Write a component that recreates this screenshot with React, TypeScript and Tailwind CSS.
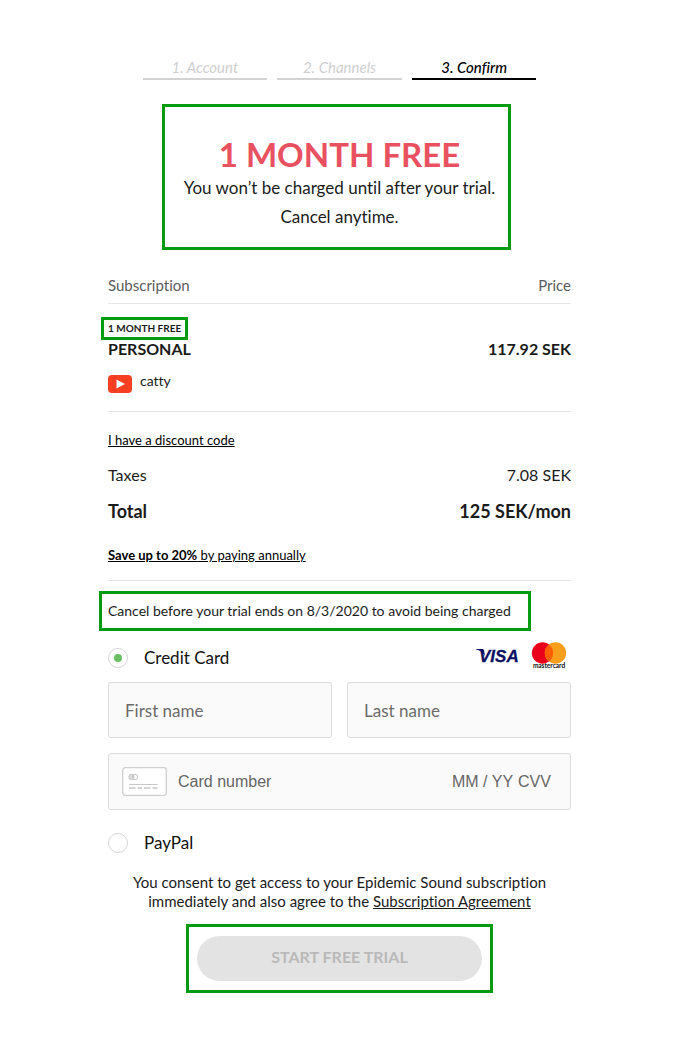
import { useState } from "react";
import clsx from "clsx";

const steps = ["1. Account", "2. Channels", "3. Confirm"];

const Highlight = ({
  className,
  children,
}: {
  className?: string;
  children: React.ReactNode;
}) => (
  <div className={clsx("border-3 border-[#059b10]", className)}>{children}</div>
);

const Steps = ({ current }: { current: number }) => (
  <ol className="mx-auto grid max-w-[394px] grid-cols-3 gap-[10px] text-center text-[15px] leading-5 italic">
    {steps.map((step, i) => (
      <li
        key={step}
        className={clsx(
          "border-b-2 pb-px",
          i === current
            ? "border-black font-medium text-black"
            : "border-[#d4d4d4] text-[#cfcfcf]",
        )}
      >
        {step}
      </li>
    ))}
  </ol>
);

const YoutubeIcon = () => (
  <svg width="24" height="18" viewBox="0 0 24 18" aria-hidden="true">
    <rect width="24" height="18" rx="4" fill="#f93f22" />
    <path d="M8.5 4.5v9l8.5-4.5z" fill="#fff" />
  </svg>
);

const VisaLogo = () => (
  <svg width="46" height="18" viewBox="0 0 46 18" role="img" aria-label="Visa">
    <path d="M1 2h6.500q1.300 0 1.600 1.500l.9 5.500Q7 3.800 1 2.600z" fill="#0c1063" />
    <text
      x="4"
      y="14.500"
      fill="#0c1063"
      stroke="#0c1063"
      strokeWidth="0.300"
      fontFamily="Liberation Sans, sans-serif"
      fontWeight="700"
      fontStyle="italic"
      fontSize="17"
    >
      VISA
    </text>
  </svg>
);

const MastercardLogo = () => (
  <svg
    width="36"
    height="28"
    viewBox="0 0 36 28"
    role="img"
    aria-label="Mastercard"
  >
    <circle cx="11.500" cy="11" r="10.700" fill="#ea001b" />
    <circle cx="24.500" cy="11" r="10.700" fill="#f79e1b" />
    <path d="M18 2.500a10.700 10.700 0 0 1 0 17a10.700 10.700 0 0 1 0-17z" fill="#ff5f00" />
    <text
      x="18"
      y="26"
      textAnchor="middle"
      fill="#111"
      fontFamily="Lato, sans-serif"
      fontWeight="700"
      fontSize="6.500"
    >
      mastercard
    </text>
  </svg>
);

const CardIcon = () => (
  <svg width="45" height="29" viewBox="0 0 45 29" fill="none" aria-hidden="true">
    <rect x="0.700" y="0.700" width="43.600" height="27.600" rx="2.500" fill="#fff" stroke="#cfcfcf" strokeWidth="1.300" />
    <g stroke="#c8c8c8">
      <circle cx="9.500" cy="10" r="2.700" fill="#dcdcdc" />
      <circle cx="13" cy="10" r="2.700" />
      <path d="M7 17.500h28.500" />
      <path d="M7 21h6.500M15.500 21h4.500M22 21h6.500M30.500 21h5" strokeWidth="1.300" />
    </g>
  </svg>
);

const MethodRadio = ({
  id,
  label,
  checked,
  onChange,
}: {
  id: string;
  label: string;
  checked: boolean;
  onChange: () => void;
}) => (
  <div className="flex items-center gap-4">
    <input
      id={id}
      type="radio"
      name="method"
      checked={checked}
      onChange={onChange}
      className="grid size-5 appearance-none place-content-center rounded-full border border-[#d6d6d6] bg-white before:size-2 before:rounded-full checked:before:bg-[#6abf62]"
    />
    <label htmlFor={id} className="text-[17px] leading-6 text-[#111]">
      {label}
    </label>
  </div>
);

const field =
  "h-14 w-full min-w-0 rounded-[3px] border border-[#dcdcdc] bg-[#fafafa] px-4 text-[17px] text-[#1b1b1b] placeholder:text-[#6b6b6b]";

const cardField =
  "min-w-0 bg-transparent font-['Liberation_Sans',Arial,sans-serif] text-base text-[#1b1b1b] placeholder:text-[#666]";

export default function App() {
  const [method, setMethod] = useState("card");

  return (
    <div className="min-h-screen bg-white pt-[57px] pr-[21px] pb-14 font-[Lato,sans-serif] text-[#1b1b1b] [font-variant-ligatures:none]">
      <main className="mx-auto max-w-[463px]">
        <Steps current={2} />

        <div className="mt-6 pr-[6px]">
          <Highlight className="mx-auto max-w-[349px] pt-7 pb-4 pl-[6px] text-center">
            <h1 className="text-[33px] leading-[38px] font-bold text-[#e95060]">
              1 MONTH FREE
            </h1>
            <p className="text-[17px] leading-[29px]">
              You won’t be charged until after your trial.
              <br />
              Cancel anytime.
            </p>
          </Highlight>
        </div>

        <table className="mt-[25px] w-full">
          <thead>
            <tr className="border-b border-[#e6e6e6] text-[15px] leading-5 text-[#5c5c5c]">
              <th className="pb-2 text-left font-normal">Subscription</th>
              <th className="pb-2 text-right font-normal">Price</th>
            </tr>
          </thead>
          <tbody>
            <tr className="border-b border-[#e6e6e6]">
              <td className="pt-[13px] pb-[18px]">
                <Highlight className="-ml-[7px] w-fit px-1 text-[10px] leading-[17px] font-bold">
                  1 MONTH FREE
                </Highlight>
                <p className="text-base leading-[18px] font-bold">PERSONAL</p>
                <div className="mt-[13px] flex items-start gap-2">
                  <span className="pt-1">
                    <YoutubeIcon />
                  </span>
                  <span className="text-[14px] leading-5">catty</span>
                </div>
              </td>
              <td className="pt-9 text-right align-top text-base leading-[18px] font-bold">
                117.92 SEK
              </td>
            </tr>
          </tbody>
        </table>

        <a
          href="#discount"
          className="mt-[18px] block w-fit text-[13px] leading-5 text-black underline"
        >
          I have a discount code
        </a>
        <dl className="mt-[13px] flex flex-col gap-3 leading-6">
          <div className="flex justify-between text-base">
            <dt>Taxes</dt>
            <dd>7.08 SEK</dd>
          </div>
          <div className="flex justify-between text-[18px] font-bold">
            <dt>Total</dt>
            <dd>125 SEK/mon</dd>
          </div>
        </dl>
        <a
          href="#annual"
          className="mt-[22px] block w-fit text-[13px] leading-5 text-black underline"
        >
          <strong>Save up to 20%</strong> by paying annually
        </a>
        <hr className="mt-[15px] border-[#e6e6e6]" />

        <Highlight className="mt-[10px] -ml-[9px] max-w-[432px] px-[6px] text-[14px] leading-[34px]">
          Cancel before your trial ends on 8/3/2020 to avoid being charged
        </Highlight>

        <form onSubmit={(e) => e.preventDefault()}>
          <div className="mt-[13px] flex h-7 items-center justify-between">
            <MethodRadio
              id="card"
              label="Credit Card"
              checked={method === "card"}
              onChange={() => setMethod("card")}
            />
            <div className="flex items-center gap-[10px] pr-1 pb-1">
              <VisaLogo />
              <MastercardLogo />
            </div>
          </div>
          <div className="mt-[10px] grid grid-cols-2 gap-[15px]">
            <input className={field} aria-label="First name" placeholder="First name" />
            <input className={field} aria-label="Last name" placeholder="Last name" />
          </div>
          <div className="mt-[15px] flex h-[57px] items-center rounded-[3px] border border-[#dcdcdc] bg-[#fafafa] pr-[18px] pl-[13px]">
            <CardIcon />
            <input
              className={clsx(cardField, "ml-[11px] flex-1")}
              aria-label="Card number"
              placeholder="Card number"
            />
            <input
              className={clsx(cardField, "w-[66px]")}
              aria-label="Expiry date"
              placeholder="MM / YY"
            />
            <input
              className={clsx(cardField, "w-[34px]")}
              aria-label="CVV"
              placeholder="CVV"
            />
          </div>
          <div className="mt-[21px]">
            <MethodRadio
              id="paypal"
              label="PayPal"
              checked={method === "paypal"}
              onChange={() => setMethod("paypal")}
            />
          </div>
          <p className="mt-[18px] text-center text-[15px] leading-[19px]">
            You consent to get access to your Epidemic Sound subscription
            <br />
            immediately and also agree to the{" "}
            <a href="#agreement" className="underline">
              Subscription Agreement
            </a>
          </p>
          <Highlight className="mx-auto mt-[13px] max-w-[307px] px-2 py-[9px]">
            <button
              type="submit"
              disabled
              className="block h-[45px] w-full rounded-full bg-[#e3e3e3] pb-1 text-base font-bold text-[#b9b9b9]"
            >
              START FREE TRIAL
            </button>
          </Highlight>
        </form>
      </main>
    </div>
  );
}
